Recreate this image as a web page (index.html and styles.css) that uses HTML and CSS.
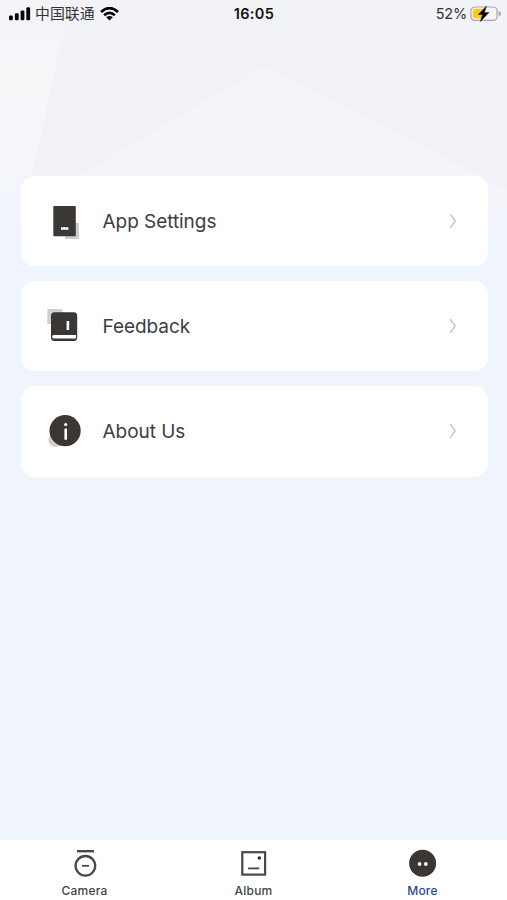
FILE: index.html
```html
<!DOCTYPE html>
<html lang="en">
<head>
<meta charset="utf-8">
<meta name="viewport" content="width=device-width">
<title>More</title>
<link rel="stylesheet" href="styles.css">
</head>
<body>
<div class="screen">
  <svg class="backdrop" viewBox="0 0 507 260" aria-hidden="true">
    <defs>
      <linearGradient id="base" x1="0" y1="0" x2="0" y2="1">
        <stop offset="0" stop-color="#f2f3f7"/>
        <stop offset=".35" stop-color="#f0f2f6"/>
        <stop offset=".65" stop-color="#f0f2f6"/>
        <stop offset="1" stop-color="#f0f4fc"/>
      </linearGradient>
      <linearGradient id="left" x1="0" y1="0" x2="0" y2="1">
        <stop offset="0" stop-color="#f3f4f8"/>
        <stop offset=".35" stop-color="#f6f7f9"/>
        <stop offset="1" stop-color="#f0f4fc"/>
      </linearGradient>
      <linearGradient id="peak" x1="0" y1="0" x2="0" y2="1">
        <stop offset="0" stop-color="#f4f5f8"/>
        <stop offset=".6" stop-color="#f3f5f9"/>
        <stop offset="1" stop-color="#f0f4fc"/>
      </linearGradient>
    </defs>
    <rect width="507" height="260" fill="url(#base)"/>
    <path d="M0 0H70L14 260H0Z" fill="url(#left)"/>
    <path d="M265 66L507 190V260H0V222Z" fill="url(#peak)"/>
  </svg>

  <header class="status">
    <div class="carrier">
      <svg width="22" height="14" viewBox="0 0 22 14"><g fill="#050505"><rect x="0" y="8.6" width="3.8" height="4.6" rx="1.2"/><rect x="5.9" y="6.2" width="3.8" height="7" rx="1.2"/><rect x="11.6" y="3.4" width="3.8" height="9.8" rx="1.2"/><rect x="17.3" y=".2" width="3.8" height="13" rx="1.2"/></g></svg>
      <span class="network">中国联通</span>
      <svg width="19" height="14" viewBox="0 0 19 14"><g fill="none" stroke="#050505" stroke-width="2.7"><path d="M1 5Q9.5-2.8 18 5"/><path d="M4.1 8.3Q9.5 3.3 14.9 8.3"/></g><path d="M6.2 10.2Q9.5 7.6 12.8 10.2L9.5 13.4Z" fill="#050505"/></svg>
    </div>
    <span class="time">16:05</span>
    <div class="power">
      <span>52%</span>
      <svg width="32" height="18" viewBox="0 0 32 18"><rect x="1" y="2" width="26" height="13.3" rx="3.6" fill="#f6f6f8" stroke="#a7a8ab" stroke-width="1.2"/><path d="M28.6 6.1Q31 6.8 31 8.7T28.6 11.3Z" fill="#a7a8ab"/><path d="M4.8 3.7H14V13.6H4.8Q2.8 13.6 2.8 11.6V5.7Q2.8 3.7 4.8 3.7Z" fill="#fdca25"/><path d="M16.4 1.3L8.3 9.5H12.6L10.4 16.5L18.9 7.6H14.3Z" fill="#080808" stroke="#080808" stroke-width=".5"/></svg>
    </div>
  </header>

  <main class="menu">
    <a class="card">
      <svg class="icon" viewBox="0 0 40 40"><path d="M21 22H35V38H21Z" fill="#cecece"/><rect x="9.3" y="5" width="22.5" height="30.3" rx="1" fill="#3b3735"/><rect x="17" y="26.2" width="7.4" height="2.6" rx=".3" fill="#fff"/></svg>
      <span class="label">App Settings</span>
      <svg class="chevron" viewBox="0 0 8 16"><path d="M1.2 1.2L6.2 8L1.2 14.8"/></svg>
    </a>
    <a class="card">
      <svg class="icon" viewBox="0 0 40 40"><rect x="3.3" y="3" width="15" height="15" fill="#cfd0d0"/><rect x="7" y="6.2" width="26.2" height="28.8" rx="3.5" fill="#3b3735"/><path d="M9.8 29H32V32.4H9.8A1.7 1.7 0 0 1 9.8 29Z" fill="#fff"/><rect x="22.6" y="15" width="2.6" height="9" rx=".3" fill="#fff"/></svg>
      <span class="label">Feedback</span>
      <svg class="chevron" viewBox="0 0 8 16"><path d="M1.2 1.2L6.2 8L1.2 14.8"/></svg>
    </a>
    <a class="card">
      <svg class="icon" viewBox="0 0 40 40"><circle cx="11.5" cy="29" r="7" fill="#cfd0d0"/><circle cx="21.1" cy="19.7" r="15.6" fill="#3b3735"/><circle cx="21.7" cy="13.5" r="1.6" fill="#fff"/><rect x="20.4" y="17.4" width="2.6" height="11.4" rx=".6" fill="#fff"/></svg>
      <span class="label">About Us</span>
      <svg class="chevron" viewBox="0 0 8 16"><path d="M1.2 1.2L6.2 8L1.2 14.8"/></svg>
    </a>
  </main>

  <nav class="tabs">
    <a class="tab">
      <svg viewBox="0 0 32 32"><g fill="none" stroke="#484848"><path d="M8 4.2H25" stroke-width="2.4"/><circle cx="16.4" cy="18.8" r="9.8" stroke-width="2.3"/><path d="M13 18.8H20" stroke-width="1.8"/></g></svg>
      <span>Camera</span>
    </a>
    <a class="tab">
      <svg viewBox="0 0 32 32"><g fill="none" stroke="#484848"><rect x="4.3" y="5.2" width="22.8" height="22.4" stroke-width="2.2"/><path d="M10.1 21.4H21.3" stroke-width="1.8"/></g><circle cx="21.3" cy="11" r="1.8" fill="#333"/></svg>
      <span>Album</span>
    </a>
    <a class="tab active">
      <svg viewBox="0 0 32 32"><circle cx="15.6" cy="16.3" r="13.5" fill="#3b3735"/><circle cx="12.6" cy="17" r="1.9" fill="#fff"/><circle cx="18.8" cy="17" r="1.9" fill="#fff"/></svg>
      <span>More</span>
    </a>
  </nav>
</div>
</body>
</html>
```
FILE: styles.css
```css
* {
  box-sizing: border-box;
}

body {
  margin: 0;
  font-family: Inter, "Noto Sans CJK SC", sans-serif;
}

.screen {
  position: relative;
  display: flex;
  flex-direction: column;
  height: 900px;
  overflow: hidden;
  background: #f0f4fc;
}

.backdrop {
  position: absolute;
  top: 0;
  left: 0;
  width: 507px;
  height: 260px;
}

.status {
  position: relative;
  display: grid;
  grid-template-columns: 1fr auto 1fr;
  align-items: center;
  height: 27px;
  padding: 0 5px 0 9px;
  color: #111;
}

.carrier,
.power {
  display: flex;
  align-items: center;
}

.network {
  margin: 0 5px 1px 4px;
  font-family: "Noto Sans CJK SC", sans-serif;
  font-size: 14.9px;
  line-height: 20px;
  color: #333;
}

.time {
  margin-right: 3px;
  font-size: 14.5px;
  font-weight: 600;
  letter-spacing: 0.35px;
}

.power {
  justify-content: flex-end;
  gap: 3px;
  font-size: 14.5px;
  letter-spacing: -0.2px;
  color: #333;
}

.menu {
  position: relative;
  display: flex;
  flex: 1;
  flex-direction: column;
  gap: 15px;
  padding: 149px 19.5px 0 20.5px;
}

.card {
  display: flex;
  align-items: center;
  height: 90.2px;
  padding: 0 31px 0 23.5px;
  border-radius: 14px;
  background: #fff;
}

.icon {
  width: 40px;
  height: 40px;
}

.label {
  flex: 1;
  margin-left: 18.5px;
  padding-top: 2px;
  font-size: 19px;
  line-height: 26px;
  letter-spacing: -0.05px;
  color: #3d3d3f;
}

.chevron {
  width: 8px;
  height: 16px;
  fill: none;
  stroke: #c2c2c4;
  stroke-width: 1.4;
}

.tabs {
  position: relative;
  display: grid;
  grid-template-columns: repeat(3, 1fr);
  height: 60px;
  background: #fff;
}

.tab {
  display: flex;
  flex-direction: column;
  align-items: center;
  padding-top: 7px;
  font-size: 12px;
  font-weight: 500;
  line-height: 16px;
  letter-spacing: 0.2px;
  color: #444;
}

.tab svg {
  width: 32px;
  height: 32px;
  margin-bottom: 4px;
}

.active {
  color: #2f4795;
}
```
